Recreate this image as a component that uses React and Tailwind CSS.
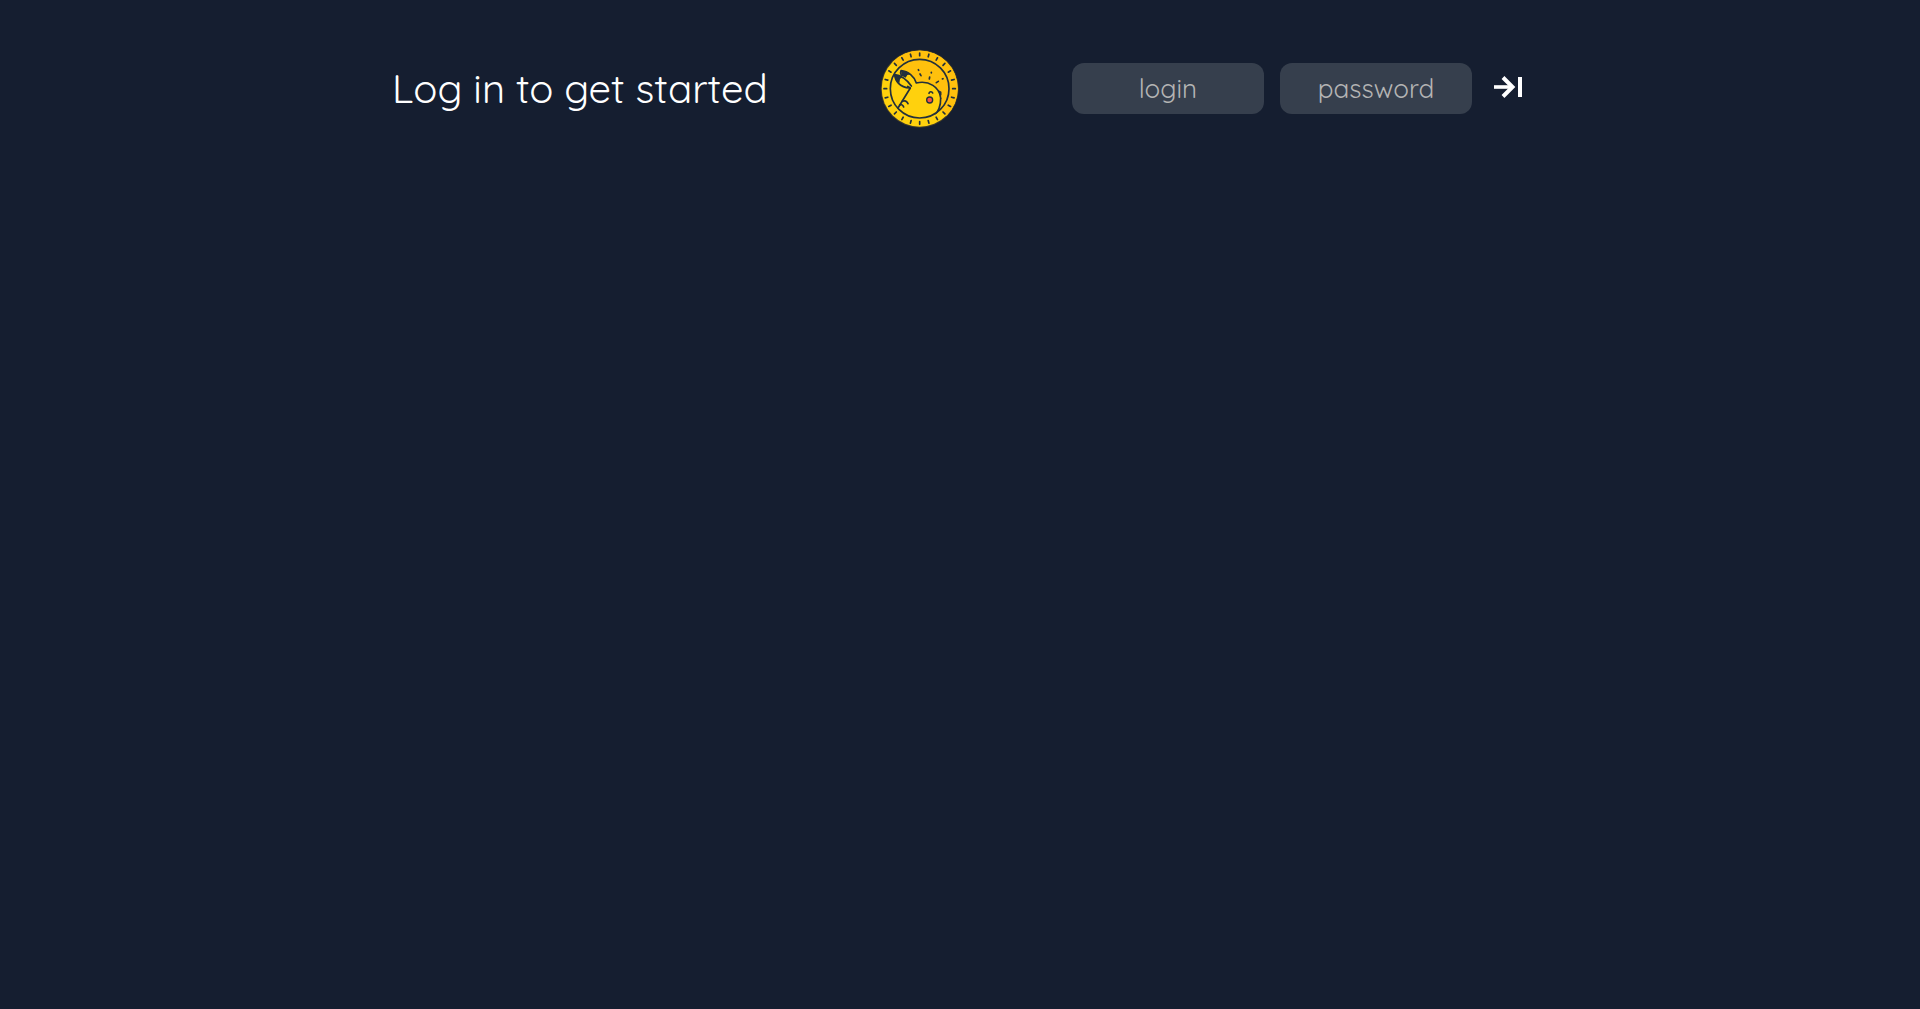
const ticks = Array.from({ length: 24 }, (_, i) => i * 15);

function CoinLogo() {
  return (
    <svg viewBox="21 24 240 240" className="size-20 shrink-0" role="img" aria-label="Coin logo">
      <defs>
        <clipPath id="coin-face">
          <circle cx="140" cy="146" r="90" />
        </clipPath>
      </defs>
      <circle cx="140" cy="146" r="117" fill="#3d3a2c" />
      <circle cx="140" cy="146" r="114" fill="#ffd10d" />
      <path d="M59 65 A114 114 0 0 1 221 227 Z" fill="#ffc00d" />
      <g stroke="#22303c" strokeWidth="5" strokeLinecap="round">
        {ticks.map((a) => (
          <path key={a} d="M140 39V47" transform={`rotate(${a} 140 146)`} />
        ))}
      </g>
      <g clipPath="url(#coin-face)">
        <path d="M74 208 L110 146 C78 150 64 120 66 104 L82 92 C106 86 124 112 130 129 C166 120 202 142 204 174 C205 202 195 218 176 240 L80 240 Z" fill="#ffd10d" />
        <path d="M203 174 C204 202 195 218 180 234" fill="none" stroke="#22303c" strokeWidth="5" />
      </g>
      <circle cx="140" cy="146" r="88" fill="none" stroke="#22303c" strokeWidth="5" />
      <g fill="none" stroke="#22303c" strokeWidth="5" strokeLinecap="round" strokeLinejoin="round">
        <path d="M75 204 L112 144 L104 139" />
        <path d="M110 144 C80 142 66 122 65 104 C84 106 102 120 115 138" />
        <path d="M85 106 C82 100 82 96 84 92 C106 94 124 110 130 129 C168 120 200 142 203 174" />
        <path d="M80 195 C85 192 90 195 92 201" />
        <path d="M88 184 C95 180 102 184 105 191" />
        <path d="M168 160 C170 154 177 154 179 159" />
        <path d="M136 89 L137 91 M141 102 L144 107 M175 97 L175 99 M170 111 L169 117 M190 128 L196 124 M208 117 L210 116" />
        <path d="M197 154 L203 157 L203 164" />
      </g>
      <path d="M65 104 C74 104 82 108 88 112 L81 117 L79 130 C70 122 65 114 65 104 Z M84 92 C96 93 106 97 113 103 L103 105 L98 113 L86 107 Z" fill="#22303c" />
      <circle cx="170" cy="180" r="9" fill="#f5504c" stroke="#22303c" strokeWidth="4" />
    </svg>
  );
}

function Field({ label, type }) {
  return (
    <input
      type={type}
      aria-label={label}
      placeholder={label}
      className="h-[51px] w-48 rounded-xl bg-[#363f4d] px-4 text-center text-[26px] font-normal text-white outline-none placeholder:text-[#b4b4b4] placeholder:opacity-100"
    />
  );
}

export default function App() {
  return (
    <main className="min-h-screen bg-[#151e30] font-['Quicksand','Inter',sans-serif] text-white">
      <header className="mx-auto flex w-3/5 items-center justify-between py-12 px-2">
        <h1 className="text-[40px] leading-[50px] font-normal">Log in to get started</h1>
        <CoinLogo />
        <form className="flex items-center gap-4" onSubmit={(e) => e.preventDefault()}>
          <Field label="login" type="text" />
          <Field label="password" type="password" />
          <button type="submit" aria-label="Log in" className="px-1">
            <svg viewBox="0 0 32 32" className="size-8" fill="none" stroke="currentColor">
              <path d="M2 15H21" strokeWidth="3.6" />
              <path d="M11 5.5L20.5 15L11 24.5" strokeWidth="4" strokeLinejoin="miter" />
              <path d="M28 5V25" strokeWidth="4" />
            </svg>
          </button>
        </form>
      </header>
    </main>
  );
}
